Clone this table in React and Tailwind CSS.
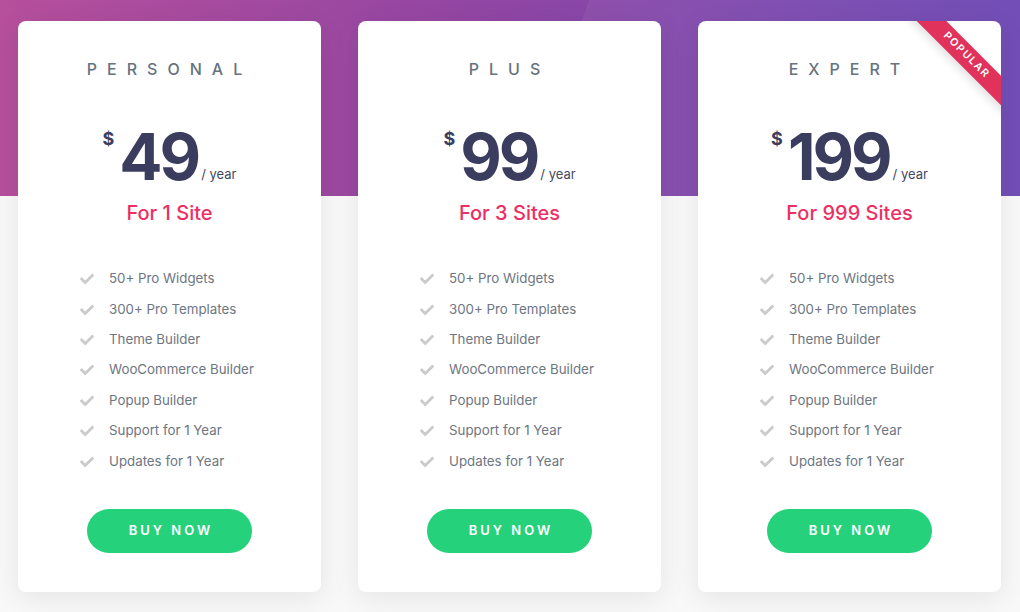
import { FaCheck } from 'react-icons/fa'

const plans = [
  { name: 'PERSONAL', price: '49', sites: 'For 1 Site' },
  { name: 'PLUS', price: '99', sites: 'For 3 Sites' },
  { name: 'EXPERT', price: '199', sites: 'For 999 Sites', popular: true },
]

const features = [
  '50+ Pro Widgets',
  '300+ Pro Templates',
  'Theme Builder',
  'WooCommerce Builder',
  'Popup Builder',
  'Support for 1 Year',
  'Updates for 1 Year',
]

function PlanCard({ plan }) {
  return (
    <div className="relative w-[303px] h-[571px] shrink-0 bg-white rounded-[8px] overflow-hidden shadow-[0_6px_28px_rgba(0,0,0,0.08)] flex flex-col items-center pt-[38px]">
      {plan.popular && (
        <div className="absolute top-0 right-0 w-[104px] h-[104px] overflow-hidden">
          <div className="absolute left-[-1px] top-[24px] w-[140px] h-[21px] rotate-45 bg-[#e0325a] shadow-[0_4px_8px_rgba(0,0,0,0.12)] flex items-center justify-center">
            <span className="text-[10.5px] font-semibold text-white tracking-[1.5px] leading-none">POPULAR</span>
          </div>
        </div>
      )}

      <h3 className="text-[16px] leading-[20px] font-medium text-[#66737f] tracking-[10px]">{plan.name}</h3>

      <div className="mt-[46px] flex items-start text-[#3b3d5f]">
        <span className="text-[18px] font-bold leading-none mt-[5px] mr-[5px]">$</span>
        <span className="text-[64px] font-bold leading-none tracking-[-3px]">{plan.price}</span>
        <span className="self-end text-[13px] leading-none mb-[8px] ml-[3px] text-[#45475f]">/ year</span>
      </div>

      <div className="mt-[12px] text-[20px] leading-[24px] font-medium text-[#ee2f63]">{plan.sites}</div>

      <ul className="mt-[39px] self-stretch pl-[62px]">
        {features.map((f) => (
          <li key={f} className="h-[30.4px] flex items-center text-[13.3px] text-[#6e7681]">
            <FaCheck className="text-[#cbcbcb] w-[14px] h-[14px] mr-[15px]" />
            {f}
          </li>
        ))}
      </ul>

      <button className="mt-[32px] w-[165px] h-[44px] rounded-full bg-[#25d27b] text-white text-[13px] font-semibold tracking-[3px] pl-[3px]">
        BUY NOW
      </button>
    </div>
  )
}

export default function App() {
  return (
    <div className="relative w-[1020px] h-[612px] overflow-hidden bg-[#f8f8f8] font-['Inter',sans-serif]">
      <div className="absolute inset-x-0 top-0 h-[196px] bg-[linear-gradient(90deg,#b64f9c_0%,#9346a3_45%,#7b47ae_75%,#6a45b2_100%)]">
        <div className="absolute inset-0 bg-[linear-gradient(110deg,transparent_54%,rgba(255,255,255,0.05)_54%)]" />
      </div>
      <div className="relative flex gap-[37px] pt-[21px] pl-[18px]">
        {plans.map((p) => (
          <PlanCard key={p.name} plan={p} />
        ))}
      </div>
    </div>
  )
}
